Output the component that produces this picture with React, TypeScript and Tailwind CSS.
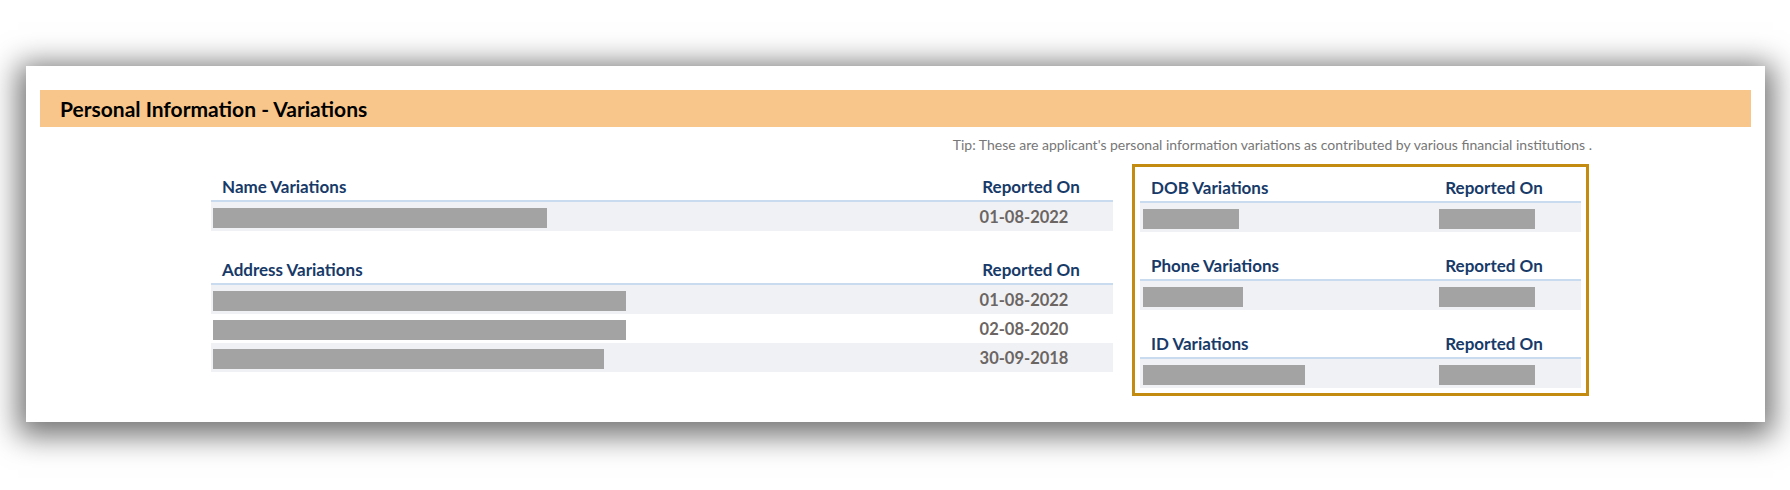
const FONT = { fontFamily: "Lato, 'Open Sans', sans-serif" };

type Row = { value: number; date?: string; dateBar?: number };

function Bar({ w }: { w: number }) {
  return <div className="h-[20px] bg-[#a3a3a3]" style={{ width: w }} />;
}

function VariationTable({
  title,
  rows,
  colWidth,
  textPad,
  barPad,
}: {
  title: string;
  rows: Row[];
  colWidth: number;
  textPad: string;
  barPad: string;
}) {
  return (
    <div>
      <div className="flex h-[29px] items-center border-b-2 border-[#c9dcef]">
        <div className={`flex-1 text-[17px] font-bold text-[#173a69] ${textPad}`}>{title}</div>
        <div
          className="pr-[4px] text-center text-[17px] font-bold text-[#173a69]"
          style={{ width: colWidth }}
        >
          Reported On
        </div>
      </div>
      {rows.map((r, i) => (
        <div
          key={i}
          className={`flex h-[29px] items-start pt-[6px] ${i % 2 === 0 ? "bg-[#f0f1f4]" : "bg-white"}`}
        >
          <div className={`flex-1 ${barPad}`}>
            <Bar w={r.value} />
          </div>
          <div className="flex justify-center pr-[18px]" style={{ width: colWidth }}>
            {r.date ? (
              <span className="-mt-[5px] text-[16.5px] font-bold leading-[29px] text-[#6b6563]">
                {r.date}
              </span>
            ) : (
              <Bar w={r.dateBar ?? 96} />
            )}
          </div>
        </div>
      ))}
    </div>
  );
}

export default function App() {
  return (
    <div className="min-h-[490px] bg-white pl-[26px] pt-[66px]" style={FONT}>
      <div className="h-[356px] w-[1739px] bg-white pt-[24px] shadow-[0_6px_28px_8px_rgba(0,0,0,0.55)]">
        <div className="mx-[14px] flex h-[37px] items-center bg-[#f8c68a] pl-[20px]">
          <h2 className="text-[21px] font-bold text-black">
            Personal Information - Variations
          </h2>
        </div>

        <div className="ml-[185px] w-[1381px]">
          <p className="mt-[9px] h-[18px] text-right text-[14px] leading-[18px] text-[#777777]">
            Tip: These are applicant's personal information variations as contributed by various financial institutions .
          </p>

          <div className="mt-[10px] flex items-start gap-[19px]">
            <div className="mt-[9px] w-[902px]">
              <VariationTable
                title="Name Variations"
                rows={[{ value: 334, date: "01-08-2022" }]}
                colWidth={160}
                textPad="pl-[11px]"
                barPad="pl-[2px]"
              />
              <div className="mt-[25px]">
                <VariationTable
                  title="Address Variations"
                  rows={[
                    { value: 413, date: "01-08-2022" },
                    { value: 413, date: "02-08-2020" },
                    { value: 391, date: "30-09-2018" },
                  ]}
                  colWidth={160}
                  textPad="pl-[11px]"
                  barPad="pl-[2px]"
                />
              </div>
            </div>

            <div className="w-[457px] border-[3px] border-[#c38c10] px-[5px] pb-[5px] pt-[7px]">
              <VariationTable
                title="DOB Variations"
                rows={[{ value: 96 }]}
                colWidth={170}
                textPad="pl-[11px]"
                barPad="pl-[3px]"
              />
              <div className="mt-[20px]">
                <VariationTable
                  title="Phone Variations"
                  rows={[{ value: 100 }]}
                  colWidth={170}
                  textPad="pl-[11px]"
                  barPad="pl-[3px]"
                />
              </div>
              <div className="mt-[20px]">
                <VariationTable
                  title="ID Variations"
                  rows={[{ value: 162 }]}
                  colWidth={170}
                  textPad="pl-[11px]"
                  barPad="pl-[3px]"
                />
              </div>
            </div>
          </div>
        </div>
      </div>
    </div>
  );
}
